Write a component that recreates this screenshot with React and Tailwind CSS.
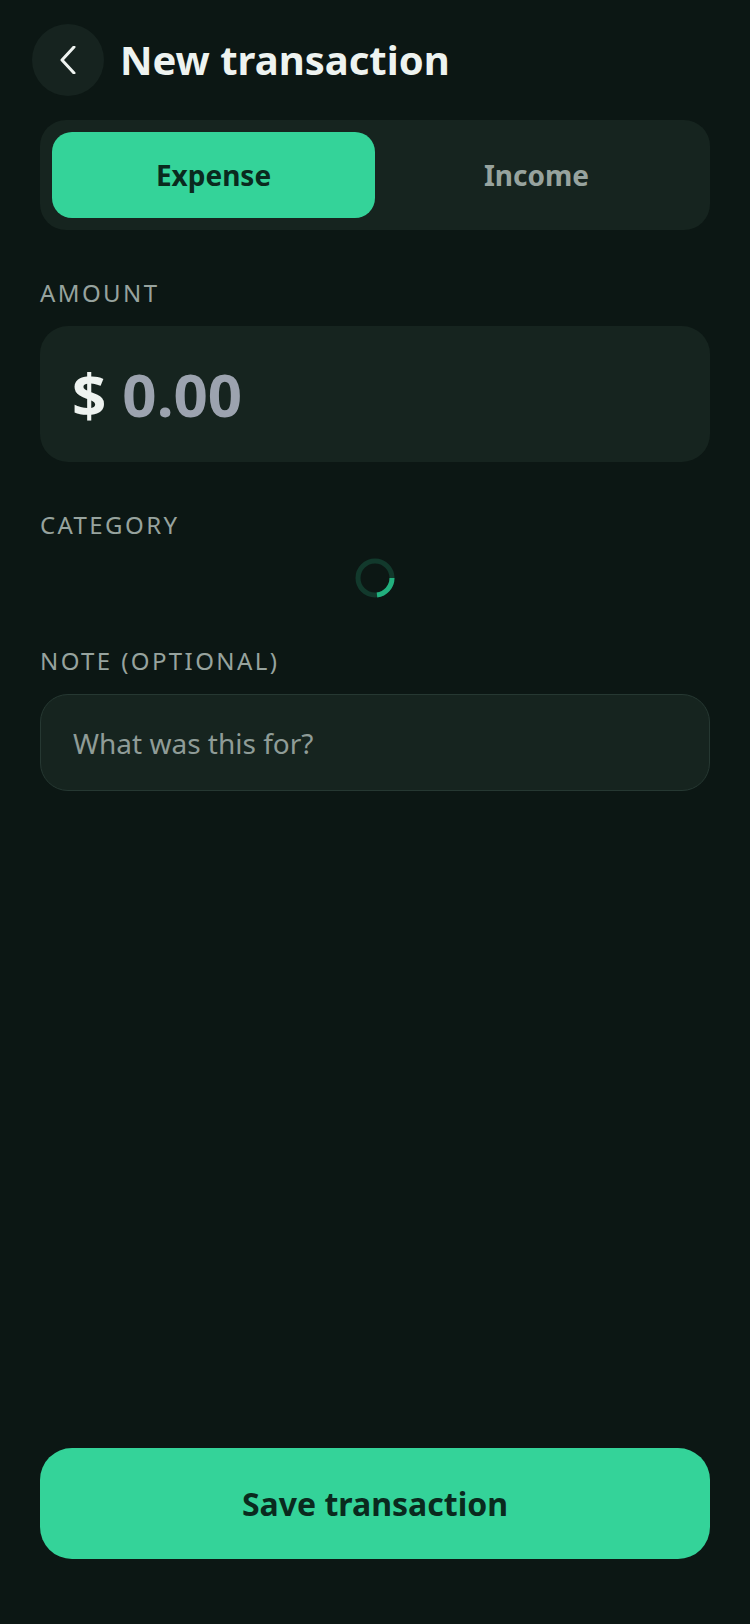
import React, { useState } from "react";

const Spinner = () => (
  <svg width="40" height="40" viewBox="0 0 40 40">
    <circle cx="20" cy="20" r="17" fill="none" stroke="#12392c" strokeWidth="5" />
    <path d="M37 20 A17 17 0 0 1 22 36.9" fill="none" stroke="#22b07e" strokeWidth="5" />
  </svg>
);

const App = () => {
  const [type, setType] = useState("expense");
  const [note, setNote] = useState("");

  return (
    <div
      className="w-[750px] min-h-[1624px] bg-[#0c1714] flex flex-col px-10"
      style={{ fontFamily: '"Noto Sans", "Open Sans", sans-serif' }}
    >
      {/* header */}
      <div className="flex items-center gap-4 pt-6 -ml-2">
        <button className="w-[72px] h-[72px] rounded-full bg-[#16231f] flex items-center justify-center">
          <svg width="18" height="28" viewBox="0 0 18 28">
            <polyline points="15,1 3,14 15,27" fill="none" stroke="#eef3f0" strokeWidth="3" strokeLinecap="round" strokeLinejoin="round" />
          </svg>
        </button>
        <h1 className="text-[40px] leading-[48px] font-bold text-[#eef3f0]">New transaction</h1>
      </div>

      {/* type switch */}
      <div className="mt-6 h-[110px] rounded-[26px] bg-[#16241f] p-3 flex">
        <button
          onClick={() => setType("expense")}
          className={`flex-1 rounded-[20px] text-[28px] font-bold ${type === "expense" ? "bg-[#34d399] text-[#0a2a1e]" : "text-[#97a39e]"}`}
        >
          Expense
        </button>
        <button
          onClick={() => setType("income")}
          className={`flex-1 rounded-[20px] text-[28px] font-bold ${type === "income" ? "bg-[#34d399] text-[#0a2a1e]" : "text-[#97a39e]"}`}
        >
          Income
        </button>
      </div>

      {/* amount */}
      <p className="mt-[47px] text-[24px] leading-[32px] tracking-[0.1em] text-[#97a39e]">AMOUNT</p>
      <div className="mt-[17px] h-[136px] rounded-[28px] bg-[#16241f] flex items-center px-8 gap-4">
        <span className="text-[60px] font-bold text-[#eef3f0]">$</span>
        <span className="text-[60px] font-bold text-[#9ca3af]">0.00</span>
      </div>

      {/* category */}
      <p className="mt-[47px] text-[24px] leading-[32px] tracking-[0.1em] text-[#97a39e]">CATEGORY</p>
      <div className="mt-[17px] flex justify-center">
        <Spinner />
      </div>

      {/* note */}
      <p className="mt-[47px] text-[24px] leading-[32px] tracking-[0.1em] text-[#97a39e]">NOTE (OPTIONAL)</p>
      <input
        value={note}
        onChange={(e) => setNote(e.target.value)}
        placeholder="What was this for?"
        className="mt-[17px] h-[97px] rounded-[28px] bg-[#16241f] border border-[#263832] px-8 text-[28px] text-[#eef3f0] placeholder:text-[#8f9c97] outline-none"
      />

      <button className="mt-auto mb-[65px] h-[111px] rounded-[32px] bg-[#34d399] text-[32px] font-bold text-[#0a2a1e]">
        Save transaction
      </button>
    </div>
  );
};

export default App;
